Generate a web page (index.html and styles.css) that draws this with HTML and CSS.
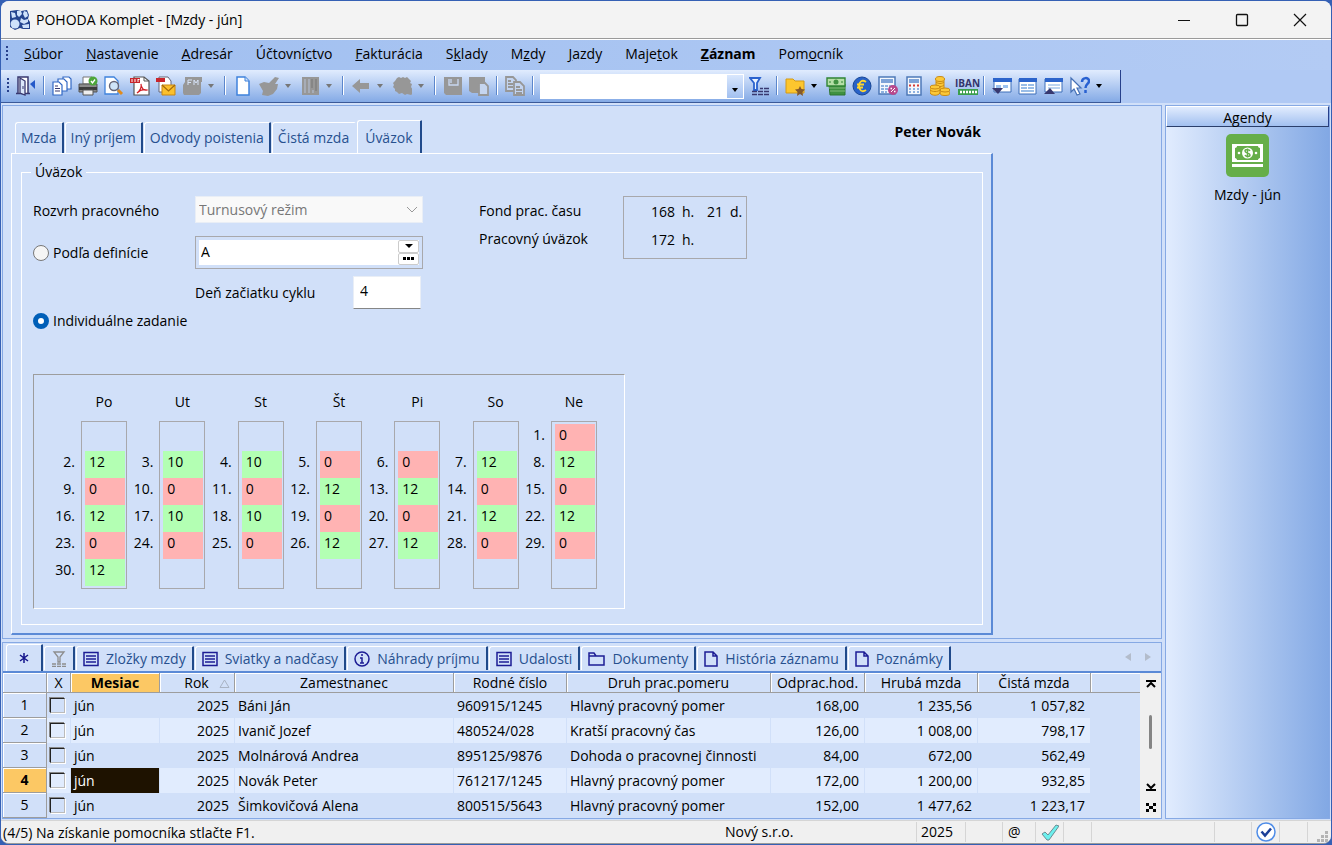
FILE: index.html
```
<!DOCTYPE html>
<html lang="sk">
<head>
    <meta charset="UTF-8">
    <meta name="viewport" content="width=device-width, initial-scale=1.0">
    <title>POHODA Komplet - [Mzdy - jún]</title>
    <link rel="stylesheet" href="styles.css">
</head>
<body>
<div class="window">

    <header class="titlebar">
        <svg class="app-logo" width="22" height="22" viewBox="0 0 22 22"><path d="M1 2l7-1 4 1 6-1 2 5-1 4 2 3v7h-7l-3-1-5 2-5-3V9z" fill="#25458f"/><g fill="#cfe2fb"><path d="M2 3l4 1 1 4-4 1zM15 2l3 1 1 4-3 2-2-4zM8 2h4l1 3-3 3-2-2z"/><circle cx="6" cy="15" r="4.500"/><path d="M12 9l3 2 4-1v3l-4 2-4-2zM13 16l7-1v4h-6z"/></g></svg>
        <span class="title">POHODA Komplet - [Mzdy - jún]</span>
        <button class="win-btn" aria-label="Minimalizovať"><svg width="14" height="14" viewBox="0 0 14 14" stroke="#111"><path d="M1 7.5h12"/></svg></button>
        <button class="win-btn" aria-label="Maximalizovať"><svg width="14" height="14" viewBox="0 0 14 14" fill="none" stroke="#111" stroke-width="1.3"><rect x="1.5" y="1.5" width="11" height="11" rx="1"/></svg></button>
        <button class="win-btn" aria-label="Zavrieť"><svg width="14" height="14" viewBox="0 0 14 14" stroke="#111" stroke-width="1.2"><path d="M1 1l12 12M13 1L1 13"/></svg></button>
    </header>

    <nav class="menu">
        <span class="grip"></span>
        <a href="#"><u>S</u>úbor</a>
        <a href="#"><u>N</u>astavenie</a>
        <a href="#"><u>A</u>dresár</a>
        <a href="#">Účtovní<u>c</u>tvo</a>
        <a href="#"><u>F</u>akturácia</a>
        <a href="#">S<u>k</u>lady</a>
        <a href="#">M<u>z</u>dy</a>
        <a href="#"><u>J</u>azdy</a>
        <a href="#">Maje<u>t</u>ok</a>
        <a href="#" class="bold"><u>Z</u>áznam</a>
        <a href="#">Pom<u>o</u>cník</a>
    </nav>

    <!-- Panel nástrojov -->
    <div class="toolbar">
        <span class="grip"></span>
        <button class="tool" aria-label="Koniec"><svg viewBox="0 0 20 20"><path d="M2 17V1h10v16M0 17.500h14" fill="#fff" stroke="#38386f" stroke-width="1.500"/><path d="M4 2l5 3v14l-5-2z" fill="#dce8fb" stroke="#38386f" stroke-width="1.300"/><path d="M7 10v3" stroke="#38386f"/><path d="M14 8l5-4v9z" fill="#2459c9"/></svg></button>
        <span class="sep"></span>
        <button class="tool" aria-label="Kopírovať"><svg viewBox="0 0 20 20" fill="#fff" stroke="#3268c4" stroke-width="1.200"><path d="M11 1h6l2 2v10h-8z"/><path d="M6 3h6l3 3v9H6z"/><path d="M1 6h6l3 3v10H1z"/><path d="M3 10h3M3 12.500h5M3 15h5" stroke="#38386f"/></svg></button>
        <button class="tool" aria-label="Tlačiť"><svg viewBox="0 0 20 20"><path d="M5 1h9v7H5z" fill="#fff" stroke="#777"/><path d="M1 8h18v8H1z" fill="#8b8b8b" stroke="#555"/><path d="M1 11h18v3H1z" fill="#3c3c3c"/><path d="M5 14h10v5H5z" fill="#eee" stroke="#555"/><circle cx="15" cy="5" r="4.500" fill="#4da63b"/><path d="M13 5l1.500 2L17 3.500" fill="none" stroke="#fff" stroke-width="1.300"/></svg></button>
        <button class="tool" aria-label="Náhľad"><svg viewBox="0 0 20 20"><path d="M1 1h9l4 4v13H1z" fill="#fff" stroke="#3f82dc" stroke-width="1.300"/><circle cx="10" cy="10" r="4.500" fill="#cfe4f8" stroke="#667" stroke-width="1.400"/><path d="M14 14l4 4" stroke="#e08b1b" stroke-width="3"/></svg></button>
        <button class="tool" aria-label="Export do PDF"><svg viewBox="0 0 20 20"><path d="M4 1h10l5 4v14H4z" fill="#fff" stroke="#555" stroke-width="1.200"/><path d="M14 1v4h5" fill="none" stroke="#555"/><path d="M0 2h10v5H0z" fill="#c8252c"/><path d="M2 3v3M5 3v3M8 3v3M8 3.500h1.500" stroke="#fff"/><path d="M7 17c3-2 5-6 4-9 0 4 3 7 6 6-3-1-7 0-10 3z" fill="none" stroke="#d11f26" stroke-width="1.200"/></svg></button>
        <button class="tool" aria-label="Poslať e-mailom"><svg viewBox="0 0 20 20"><path d="M3 1h9l3 4v11H3z" fill="#fff" stroke="#667" /><path d="M0 2h9v4H0z" fill="#c8252c"/><path d="M6 9h13v10H6z" fill="#fbc02d" stroke="#c98612"/><path d="M6 9l6.500 6L19 9" fill="none" stroke="#a56b0a" stroke-width="1.200"/></svg></button>
        <button class="tool wide" aria-label="Fiškálna tlač"><svg viewBox="0 0 20 20"><path d="M3 1h17v5h-1v11l-2 2H2l-1-2V9l2-3z" fill="#979797"/><path d="M6 9V4h4M6 6.500h3M12 9V4l2 3 2-3v5" fill="none" stroke="#d8e4f8"/></svg><i class="caret"></i></button>
        <span class="sep"></span>
        <button class="tool" aria-label="Nový"><svg viewBox="0 0 20 20"><path d="M4 1h8l4 4v14H4z" fill="#fff" stroke="#3f82dc" stroke-width="1.500"/><path d="M12 1v4h4" fill="#cfe2fb" stroke="#3f82dc"/></svg></button>
        <button class="tool wide" aria-label="Prenos"><svg viewBox="0 0 20 20"><path d="M0 8l5-2 5 1 6-6 4 1-4 6h3l-1 5-4 5-5 2-6-1 1-4z" fill="#979797"/></svg><i class="caret"></i></button>
        <button class="tool wide" aria-label="Záznamy"><svg viewBox="0 0 20 20"><path d="M2 1h17v18H2z" fill="#979797"/><path d="M5 3v14M9 3v14M13 14v3" stroke="#b6c2d8"/><path d="M11 3h2v9h-2zM15 3h2v12h-2z" fill="#868686"/></svg><i class="caret"></i></button>
        <span class="sep"></span>
        <button class="tool wide" aria-label="Späť"><svg viewBox="0 0 20 20"><path d="M1 10l8-7v4h9v6H9v4z" fill="#979797"/></svg><i class="caret"></i></button>
        <button class="tool wide" aria-label="História"><svg viewBox="0 0 20 20"><path d="M5 2l2-1 2 1 2-1 2 1 2-1 2 2 2 2-1 2 2 1-1 3 2 3 1 3-3 2-4-1-2 1-3-2-3 1-2-2-2-1 0-2-2-2 1-2-1-2 2-2z" fill="#979797"/></svg><i class="caret"></i></button>
        <span class="sep"></span>
        <button class="tool" aria-label="Uložiť"><svg viewBox="0 0 20 20"><path d="M1 1h18v18H3l-2-2z" fill="#979797"/><path d="M6 3v6h9V3M8 3v4" fill="none" stroke="#c9d8f1" stroke-width="1.300"/></svg></button>
        <button class="tool" aria-label="Uložiť kópiu"><svg viewBox="0 0 20 20"><path d="M0 1h16v16H3l-3-2z" fill="#979797"/><path d="M10 7h6l3 3v9h-9z" fill="#c5d5ef" stroke="#979797" stroke-width="1.800"/></svg></button>
        <span class="sep"></span>
        <button class="tool" aria-label="Kopírovať záznam"><svg viewBox="0 0 20 20" fill="#c3d4f0" stroke="#979797" stroke-width="1.800"><path d="M1 1h7l3 3v11H1z"/><path d="M9 6h6l4 4v9H9z"/><path d="M3 5h3M3 8h5M3 11h5M11 11h4M11 14h6M11 17h6"/></svg></button>
        <span class="sep"></span>
        <span class="combo"><input type="text" aria-label="Hľadať"><button aria-label="Rozbaliť"><i class="caret dark"></i></button></span>
        <button class="tool" aria-label="Filter"><svg viewBox="0 0 20 20"><path d="M1 2h10L8 7v7H5V7z" fill="#e9f3ff" stroke="#2a62ce" stroke-width="1.800"/><path d="M3 15.500h5m1 0h5m1 0h5M3 18.500h5m1 0h5m1 0h5M11 12.500h3m1 0h5" stroke="#38386f" stroke-width="1.500"/></svg></button>
        <span class="sep"></span>
        <button class="tool wide" aria-label="Obľúbené"><svg viewBox="0 0 20 20"><path d="M1 3h7l2 2h9v12H1z" fill="#fcc62f" stroke="#d39a16"/><path d="M15 10l1.500 3 3.500.5-2.500 2.500.5 4-3-2-3 2 .5-4-2.500-2.500 3.500-.5z" fill="#84592a"/></svg><i class="caret dark"></i></button>
        <button class="tool" aria-label="Peniaze"><svg viewBox="0 0 20 20"><path d="M3 8h16v11H4z" fill="#3f9140" stroke="#2c7430"/><path d="M3 12h16M4 15h15" stroke="#82bb7b"/><path d="M1 2h18v8H1z" fill="#b5dfa7" stroke="#2f8434" stroke-width="1.400"/><circle cx="10" cy="6" r="2.500" fill="#3f9140"/><path d="M3 6h2M15 6h2" stroke="#2f8434"/></svg></button>
        <button class="tool" aria-label="Cudzia mena"><svg viewBox="0 0 20 20"><circle cx="10" cy="10" r="9" fill="#2862c8" stroke="#184795"/><path d="M14 6c-4-3-7 0-7 4s3 7 7 4M5 8.500h7M5 11.500h6" fill="none" stroke="#ffd52e" stroke-width="1.800"/></svg></button>
        <button class="tool" aria-label="Výpočet percent"><svg viewBox="0 0 20 20"><path d="M1 1h16v17H1z" fill="#f4f8fd" stroke="#4e79b8" stroke-width="1.500"/><path d="M3 3h12v4H3z" fill="#7ea3d8"/><path d="M3 10h3m1 0h3m1 0h3M3 13h3m1 0h3M3 16h3m1 0h2" stroke="#8db1e0" stroke-width="2"/><circle cx="15" cy="14" r="5" fill="#b8478c"/><path d="M13 16l4-4" stroke="#fff"/><path d="M12.500 12.500h1.500M16 15.500h1.500" stroke="#fff" stroke-width="1.500"/></svg></button>
        <button class="tool" aria-label="Kalkulačka"><svg viewBox="0 0 20 20"><path d="M3 1h14v18H3z" fill="#f4f8fd" stroke="#4e79b8" stroke-width="1.500"/><path d="M5 3h10v4H5z" fill="#7ea3d8"/><path d="M5 9.500h2m2 0h2m2 0h2" stroke="#d43b36" stroke-width="2"/><path d="M5 13h2m2 0h2m2 0h2M5 16h2m2 0h2m2 0h2" stroke="#8db1e0" stroke-width="2"/></svg></button>
        <button class="tool" aria-label="Pokladňa"><svg viewBox="0 0 20 20" fill="#fbc838" stroke="#c98a12"><path d="M6 3v12h8V3z"/><ellipse cx="10" cy="3" rx="4.500" ry="2.500"/><path d="M6 6c2 2 6 2 8 0M6 9c2 2 6 2 8 0" fill="none"/><path d="M0 11v6c2 3 8 3 10 0v-6z"/><ellipse cx="5" cy="11" rx="5" ry="2"/><path d="M0 14c2 2 8 2 10 0" fill="none"/><ellipse cx="15" cy="17" rx="5" ry="2.500"/><ellipse cx="15" cy="14" rx="5" ry="2"/></svg></button>
        <button class="tool iban" aria-label="Kontrola IBAN"><span>IBAN</span><svg viewBox="0 0 20 6"><path d="M0 0h20v6H0z" fill="#3a9e4c"/><path d="M2 3h2m1 0h2m1 0h2m1 0h2m1 0h2m1 0h2" stroke="#fff" stroke-width="2.500"/></svg></button>
        <span class="sep"></span>
        <button class="tool" aria-label="Horná tabuľka"><svg viewBox="0 0 20 20"><path d="M2 3h17v13H2z" fill="#fff" stroke="#3d6fb9"/><path d="M1 2h19v4H1z" fill="#2c64cb"/><path d="M4 9h5v3H4zM11 9h5v3h-5z" fill="#9cc1ee"/><path d="M0 12h11l-5 6z" fill="#38386f"/></svg></button>
        <button class="tool" aria-label="Formulár a tabuľka"><svg viewBox="0 0 20 20"><path d="M1 3h17v15H1z" fill="#fff" stroke="#3d6fb9"/><path d="M1 2h18v4H1z" fill="#2c64cb"/><path d="M3 9h6m1 0h6M3 12h6m1 0h6M3 15h13" stroke="#78a8e0" stroke-width="1.500"/></svg></button>
        <button class="tool" aria-label="Dolná tabuľka"><svg viewBox="0 0 20 20"><path d="M1 3h17v13H1z" fill="#fff" stroke="#3d6fb9"/><path d="M1 2h18v4H1z" fill="#2c64cb"/><path d="M4 9h12M4 12h12" stroke="#78a8e0"/><path d="M0 18h11l-5-6z" fill="#38386f"/></svg></button>
        <button class="tool wide" aria-label="Pomocník"><svg viewBox="0 0 20 20"><path d="M1 2v14l3-3 3 6 3-1-3-6h4z" fill="#fff" stroke="#4570b5" stroke-width="1.200"/><path d="M12 6c0-5 7-5 7-1 0 3-3.500 3-3.500 7M15.500 14v3" fill="none" stroke="#2861d1" stroke-width="2.500"/></svg><i class="caret dark"></i></button>
    </div>

    <main class="workspace">
        <div class="left">
            <!-- Formulár agendy -->
            <section class="pane form-pane">
                <div class="sheet">
                    <div class="tab-row">
                        <button class="tab">Mzda</button>
                        <button class="tab">Iný príjem</button>
                        <button class="tab">Odvody poistenia</button>
                        <button class="tab before-active">Čistá mzda</button>
                        <button class="tab active">Úväzok</button>
                        <strong class="employee">Peter Novák</strong>
                    </div>
                    <div class="panel">
                        <fieldset>
                            <legend>Úväzok</legend>
                            <div class="form-top">
                                <div class="fields">
                                    <label class="field-label" for="rozvrh">Rozvrh pracovného</label>
                                    <div class="select-wrap">
                                        <select id="rozvrh" disabled><option>Turnusový režim</option></select>
                                        <svg width="10" height="6" viewBox="0 0 10 6" fill="none" stroke="#999"><path d="M0 0l5 5 5-5"/></svg>
                                    </div>
                                    <label class="radio"><input type="radio" name="zadanie">Podľa definície</label>
                                    <div class="spin-box">
                                        <input type="text" value="A" aria-label="Definícia">
                                        <div class="spin">
                                            <button aria-label="Zoznam"><i class="caret dark big"></i></button>
                                            <button aria-label="Vybrať"><svg width="12" height="3" viewBox="0 0 12 3"><path d="M0 0h3v3H0zM4 0h3v3H4zM8 0h3v3H8z"/></svg></button>
                                        </div>
                                    </div>
                                    <div class="cycle">
                                        <label for="den">Deň začiatku cyklu</label>
                                        <input id="den" type="text" value="4">
                                    </div>
                                    <label class="radio individual"><input type="radio" name="zadanie" checked>Individuálne zadanie</label>
                                </div>
                                <div class="fund-labels">
                                    <span>Fond prac. času</span>
                                    <span>Pracovný úväzok</span>
                                </div>
                                <div class="fund">
                                    <span>168</span><span>h.</span><span>21</span><span>d.</span>
                                    <span>172</span><span>h.</span>
                                </div>
                            </div>

                            <!-- Kalendár odpracovaných hodín -->
                            <div class="calendar">
                                <div class="day">
                                    <span class="name">Po</span>
                                    <div class="dates"><span></span><span>2.</span><span>9.</span><span>16.</span><span>23.</span><span>30.</span></div>
                                    <div class="hours"><span></span><input class="work" value="12" aria-label="2."><input class="free" value="0" aria-label="9."><input class="work" value="12" aria-label="16."><input class="free" value="0" aria-label="23."><input class="work" value="12" aria-label="30."></div>
                                </div>
                                <div class="day">
                                    <span class="name">Ut</span>
                                    <div class="dates"><span></span><span>3.</span><span>10.</span><span>17.</span><span>24.</span></div>
                                    <div class="hours"><span></span><input class="work" value="10" aria-label="3."><input class="free" value="0" aria-label="10."><input class="work" value="10" aria-label="17."><input class="free" value="0" aria-label="24."></div>
                                </div>
                                <div class="day">
                                    <span class="name">St</span>
                                    <div class="dates"><span></span><span>4.</span><span>11.</span><span>18.</span><span>25.</span></div>
                                    <div class="hours"><span></span><input class="work" value="10" aria-label="4."><input class="free" value="0" aria-label="11."><input class="work" value="10" aria-label="18."><input class="free" value="0" aria-label="25."></div>
                                </div>
                                <div class="day">
                                    <span class="name">Št</span>
                                    <div class="dates"><span></span><span>5.</span><span>12.</span><span>19.</span><span>26.</span></div>
                                    <div class="hours"><span></span><input class="free" value="0" aria-label="5."><input class="work" value="12" aria-label="12."><input class="free" value="0" aria-label="19."><input class="work" value="12" aria-label="26."></div>
                                </div>
                                <div class="day">
                                    <span class="name">Pi</span>
                                    <div class="dates"><span></span><span>6.</span><span>13.</span><span>20.</span><span>27.</span></div>
                                    <div class="hours"><span></span><input class="free" value="0" aria-label="6."><input class="work" value="12" aria-label="13."><input class="free" value="0" aria-label="20."><input class="work" value="12" aria-label="27."></div>
                                </div>
                                <div class="day">
                                    <span class="name">So</span>
                                    <div class="dates"><span></span><span>7.</span><span>14.</span><span>21.</span><span>28.</span></div>
                                    <div class="hours"><span></span><input class="work" value="12" aria-label="7."><input class="free" value="0" aria-label="14."><input class="work" value="12" aria-label="21."><input class="free" value="0" aria-label="28."></div>
                                </div>
                                <div class="day">
                                    <span class="name">Ne</span>
                                    <div class="dates"><span>1.</span><span>8.</span><span>15.</span><span>22.</span><span>29.</span></div>
                                    <div class="hours"><input class="free" value="0" aria-label="1."><input class="work" value="12" aria-label="8."><input class="free" value="0" aria-label="15."><input class="work" value="12" aria-label="22."><input class="free" value="0" aria-label="29."></div>
                                </div>
                            </div>
                        </fieldset>
                    </div>
                </div>
            </section>

            <!-- Tabuľka agendy -->
            <section class="pane table-pane">
                <div class="tab-row sub">
                    <button class="tab active star" aria-label="Všetko"><svg width="10" height="10" viewBox="0 0 10 10" stroke="#15158c" stroke-width="1.5"><path d="M5 0v10M1 2l8 6M9 2L1 8"/></svg></button>
                    <button class="tab" aria-label="Filter"><svg width="16" height="16" viewBox="0 0 16 16" fill="none" stroke="#8d8d8d" stroke-width="1.3"><path d="M3 1h10L9 6v5H7V6zM1 13h4m1 0h4m1 0h4M1 15.500h4m1 0h4m1 0h4"/></svg></button>
                    <button class="tab"><svg width="16" height="16" viewBox="0 0 16 16" fill="none" stroke="#1d1d95" stroke-width="1.5"><path d="M1 1.500h14v13H1zM3 5h10M3 8h10M3 11h10"/></svg>Zložky mzdy</button>
                    <button class="tab"><svg width="16" height="16" viewBox="0 0 16 16" fill="none" stroke="#1d1d95" stroke-width="1.5"><path d="M1 1.500h14v13H1zM3 5h10M3 8h10M3 11h10"/></svg>Sviatky a nadčasy</button>
                    <button class="tab"><svg width="16" height="16" viewBox="0 0 16 16" fill="none" stroke="#1d1d95" stroke-width="1.5"><circle cx="8" cy="8" r="7"/><path d="M8 3v2M6 7h2v5M6 12h4"/></svg>Náhrady príjmu</button>
                    <button class="tab"><svg width="16" height="16" viewBox="0 0 16 16" fill="none" stroke="#1d1d95" stroke-width="1.5"><path d="M1 1.500h14v13H1zM3 5h10M3 8h10M3 11h10"/></svg>Udalosti</button>
                    <button class="tab"><svg width="17" height="16" viewBox="0 0 17 16" fill="none" stroke="#1d1d95" stroke-width="1.5"><path d="M1 14V2h5l2 3h8v9zM1 5h7"/></svg>Dokumenty</button>
                    <button class="tab"><svg width="14" height="16" viewBox="0 0 14 16" fill="none" stroke="#1d1d95" stroke-width="1.5"><path d="M1 1h8l4 4v10H1zM9 1v4h4"/></svg>História záznamu</button>
                    <button class="tab"><svg width="14" height="16" viewBox="0 0 14 16" fill="none" stroke="#1d1d95" stroke-width="1.5"><path d="M1 1h8l4 4v10H1zM9 1v4h4"/></svg>Poznámky</button>
                    <div class="arrows">
                        <button aria-label="Doľava"><svg width="6" height="8" viewBox="0 0 6 8" fill="#b3bccb"><path d="M6 0v8L0 4z"/></svg></button>
                        <button aria-label="Doprava"><svg width="6" height="8" viewBox="0 0 6 8" fill="#b3bccb"><path d="M0 0v8l6-4z"/></svg></button>
                    </div>
                </div>
                <div class="grid-area">
                    <table>
                        <colgroup><col class="c-num"><col class="c-x"><col class="c-month"><col class="c-year"><col class="c-name"><col class="c-sum"><col class="c-type"><col class="c-hours"><col class="c-sum"><col class="c-sum"><col></colgroup>
                        <thead>
                            <tr><th></th><th>X</th><th class="sorted">Mesiac</th><th class="year">Rok<svg width="11" height="9" viewBox="0 0 11 9" fill="none" stroke="#a9b3c4"><path d="M1 8.500h9L5.500 1z"/></svg></th><th>Zamestnanec</th><th>Rodné číslo</th><th>Druh prac.pomeru</th><th>Odprac.hod.</th><th>Hrubá mzda</th><th>Čistá mzda</th><th class="rest"></th></tr>
                        </thead>
                        <tbody>
                            <tr><th>1</th><td><input type="checkbox" aria-label="Riadok 1"></td><td>jún</td><td class="r">2025</td><td>Báni Ján</td><td>960915/1245</td><td>Hlavný pracovný pomer</td><td class="r">168,00</td><td class="r">1 235,56</td><td class="r">1 057,82</td><td class="rest"></td></tr>
                            <tr><th>2</th><td><input type="checkbox" aria-label="Riadok 2"></td><td>jún</td><td class="r">2025</td><td>Ivanič Jozef</td><td>480524/028</td><td>Kratší pracovný čas</td><td class="r">126,00</td><td class="r">1 008,00</td><td class="r">798,17</td><td class="rest"></td></tr>
                            <tr><th>3</th><td><input type="checkbox" aria-label="Riadok 3"></td><td>jún</td><td class="r">2025</td><td>Molnárová Andrea</td><td>895125/9876</td><td>Dohoda o pracovnej činnosti</td><td class="r">84,00</td><td class="r">672,00</td><td class="r">562,49</td><td class="rest"></td></tr>
                            <tr class="current"><th>4</th><td><input type="checkbox" aria-label="Riadok 4"></td><td class="cursor">jún</td><td class="r">2025</td><td>Novák Peter</td><td>761217/1245</td><td>Hlavný pracovný pomer</td><td class="r">172,00</td><td class="r">1 200,00</td><td class="r">932,85</td><td class="rest"></td></tr>
                            <tr><th>5</th><td><input type="checkbox" aria-label="Riadok 5"></td><td>jún</td><td class="r">2025</td><td>Šimkovičová Alena</td><td>800515/5643</td><td>Hlavný pracovný pomer</td><td class="r">152,00</td><td class="r">1 477,62</td><td class="r">1 223,17</td><td class="rest"></td></tr>
                        </tbody>
                    </table>
                    <div class="scroll">
                        <button aria-label="Na začiatok"><svg width="10" height="8" viewBox="0 0 10 8" fill="none" stroke="#000" stroke-width="2"><path d="M0 1h10M1 7l4-4 4 4"/></svg></button>
                        <div class="track"><div class="thumb"></div></div>
                        <button aria-label="Na koniec"><svg width="10" height="8" viewBox="0 0 10 8" fill="none" stroke="#000" stroke-width="2"><path d="M0 7h10M1 1l4 4 4-4"/></svg></button>
                        <button aria-label="Rozdeliť"><svg width="10" height="9" viewBox="0 0 10 9"><path d="M0 0h3v3H0zM7 0h3v3H7zM3 3h4v3H3zM0 6h3v3H0zM7 6h3v3H7z"/></svg></button>
                    </div>
                </div>
            </section>
        </div>

        <!-- Otvorené agendy -->
        <aside class="pane agendas">
            <h2>Agendy</h2>
            <a href="#">
                <svg width="43" height="43" viewBox="0 0 43 43"><rect width="43" height="43" rx="5" fill="#66ae49"/><path d="M6 10h31v18H6zM6 30h31v3H6z" fill="#fff"/><path d="M9 14c1 0 2-1 2-2h21c0 1 1 2 2 2v10c-1 0-2 1-2 2H11c0-1-1-2-2-2z" fill="#66ae49"/><circle cx="21.500" cy="19" r="5.500" fill="#fff"/><circle cx="13" cy="19" r="1.300" fill="#fff"/><circle cx="30" cy="19" r="1.300" fill="#fff"/><path d="M24 17c-1-2-5-2-5 0 0 2.500 5 1.500 5 4 0 2-4 2-5 0M21.500 14.500v9" fill="none" stroke="#66ae49" stroke-width="1.500"/></svg>
                <span>Mzdy - jún</span>
            </a>
        </aside>
    </main>

    <footer class="status">
        <span class="help">(4/5) Na získanie pomocníka stlačte F1.</span>
        <span class="s-firm">Nový s.r.o.</span>
        <span class="s-year">2025</span>
        <span class="s-mid"></span>
        <span class="s-at">@</span>
        <span class="s-small"><svg width="18" height="17" viewBox="0 0 18 17"><path d="M1 10l3-2 3 3 8-10 3 1L8 16H6z" fill="#6cf0ee" stroke="#6b8c93"/></svg></span>
        <span class="s-small"></span>
        <span class="s-wide"></span>
        <span class="s-mid"></span>
        <span class="s-small"><svg width="20" height="20" viewBox="0 0 20 20"><circle cx="10" cy="10" r="9" fill="#fff" stroke="#4f8de8" stroke-width="1.500"/><path d="M5.500 9.500l3.500 4 6-7" fill="none" stroke="#1c3f98" stroke-width="2.500"/></svg></span>
        <span class="s-small"></span>
        <span class="s-grip"><svg width="11" height="11" viewBox="0 0 11 11" fill="#b4b4b4"><path d="M8 0h3v3H8zM4 4h3v3H4zM8 4h3v3H8zM0 8h3v3H0zM4 8h3v3H4zM8 8h3v3H8z"/></svg></span>
    </footer>
</div>
</body>
</html>
```
FILE: styles.css
```
* {
    box-sizing: border-box;
}

body {
    margin: 0;
    background: #3560b4;
    font-family: "Open Sans", "Noto Sans", sans-serif;
    font-size: 14px;
    line-height: 20px;
    color: #000;
}

button, input, select {
    margin: 0;
    padding: 0;
    border: none;
    border-radius: 0;
    background: none;
    font: inherit;
    color: inherit;
}

a {
    color: inherit;
    text-decoration: none;
}

svg {
    flex-shrink: 0;
}

.window {
    display: flex;
    flex-direction: column;
    min-height: calc(100vh - 2px);
    margin: 1px 1px 0;
    border-bottom: 1px solid #9a9a9a;
    border-radius: 8px;
    background: #d1e0f9;
    overflow: hidden;
}

/* Titulok okna */
.titlebar {
    display: flex;
    align-items: center;
    height: 38px;
    padding: 0 2px 0 8px;
    background: #f3f3f3;
    border-bottom: 1px solid #9a9a9a;
}

.title {
    flex: 1;
    padding-left: 5px;
}

.win-btn {
    display: flex;
    align-items: center;
    justify-content: center;
    width: 58px;
    height: 100%;
}

/* Hlavná ponuka */
.menu {
    display: flex;
    align-items: center;
    gap: 1px;
    height: 31px;
    padding: 0 0 2px 5px;
    border-top: 1px solid #fff;
    background: linear-gradient(90deg, #a0bff0, #b3cbf4);
}

.menu a {
    padding: 0 11px;
}

.grip {
    width: 6px;
    height: 16px;
    background: repeating-linear-gradient(180deg, #27408b 0 2px, transparent 2px 4px);
    background-size: 2px 100%;
    background-repeat: no-repeat;
}

.bold {
    font-weight: bold;
}

/* Panel nástrojov */
.toolbar {
    display: flex;
    align-items: center;
    align-self: flex-start;
    height: 33px;
    padding: 0 12px 1px 6px;
    background: linear-gradient(180deg, #e1ecfe, #84aae6);
    border-right: 1px solid #27408b;
    border-bottom: 1px solid #3b5998;
    box-shadow: 600px 0 0 0 #b0c9f4;
}

.tool {
    display: flex;
    align-items: center;
    width: 26px;
    height: 26px;
    padding-left: 3px;
}

.tool svg {
    width: 20px;
    height: 20px;
}

.wide {
    width: 41px;
}

.caret {
    margin-left: 6px;
    border: 3px solid transparent;
    border-top: 4px solid #777;
    border-bottom: 0;
}

.caret.dark {
    border-top-color: #000;
}

.sep {
    width: 2px;
    height: 19px;
    margin: 0 4px;
    background: #fff;
    border-left: 1px solid #5b86cc;
}

.iban {
    flex-direction: column;
    justify-content: center;
    font-size: 10px;
    line-height: 12px;
    font-weight: bold;
    color: #33336b;
}

.iban svg {
    height: 6px;
}

.combo {
    display: flex;
    width: 204px;
    height: 25px;
    margin: 2px 2px 0;
    padding: 1px;
    background: #fff;
}

.combo input {
    flex: 1;
    min-width: 0;
}

.combo button {
    width: 16px;
    background: linear-gradient(180deg, #d9e7fd, #a2c0f0);
}

.combo .caret {
    display: inline-block;
    margin: 0;
}

/* Pracovná plocha */
.workspace {
    display: flex;
    flex: 1;
    gap: 3px;
    padding: 2px 1px 1px;
}

.left {
    display: flex;
    flex: 1;
    flex-direction: column;
    gap: 3px;
    min-width: 0;
}

.pane {
    border: 1px solid #86a9e4;
}

.form-pane {
    display: flex;
    flex: 1;
    padding: 13px 8px 3px;
}

.sheet {
    display: flex;
    flex: 1;
    flex-direction: column;
    max-width: 982px;
}

.tab-row {
    display: flex;
    align-items: flex-end;
    gap: 1px;
    height: 34px;
    padding-left: 4px;
}

.tab {
    display: flex;
    align-items: center;
    justify-content: center;
    height: 31px;
    padding: 0 5px;
    border: 1px solid #fff;
    border-right: 2px solid #204a8b;
    border-bottom: 0;
    border-radius: 3px 1px 0 0;
    color: #27508f;
    white-space: nowrap;
}

.tab.active {
    height: 34px;
    padding: 0 7px;
    margin-bottom: -1px;
    background: #d1e0f9;
}

.tab.before-active {
    border-right-color: transparent;
}

.employee {
    align-self: flex-start;
    margin-left: auto;
    padding: 3px 12px 0 0;
}

.panel {
    display: flex;
    flex: 1;
    padding: 8px 8px 8px 9px;
    border: 1px solid #fff;
    border-right: 2px solid #5b8ad6;
    border-bottom: 2px solid #5b8ad6;
}

fieldset {
    flex: 1;
    min-width: 0;
    margin: 0;
    padding: 14px 11px;
    border: 1px solid #fff;
}

legend {
    padding: 0 4px;
    margin-left: -2px;
}

.form-top {
    display: flex;
}

.fields {
    display: grid;
    grid-template-columns: 162px 228px;
    grid-template-rows: 40px 40px 35px 20px;
    align-items: start;
}

.field-label {
    line-height: 30px;
}

.select-wrap {
    position: relative;
}

.select-wrap select {
    appearance: none;
    width: 100%;
    height: 27px;
    padding-left: 3px;
    border: 1px solid #e9eef6;
    background: #f9f9f9;
    color: #777;
    opacity: 1;
}

.select-wrap svg {
    position: absolute;
    right: 6px;
    top: 11px;
}

.radio {
    display: flex;
    align-items: center;
    gap: 4px;
    height: 34px;
}

.individual {
    grid-column: 1 / -1;
    height: 20px;
}

.radio input {
    appearance: none;
    width: 16px;
    height: 16px;
    border: 1px solid #777;
    border-radius: 50%;
    background: #f5f5f5;
}

.radio input:checked {
    border: 5px solid #005fb8;
    background: #fff;
}

.spin-box {
    display: flex;
    height: 33px;
    padding: 3px;
    border: 1px solid #a8a8ac;
}

.spin-box input {
    flex: 1;
    min-width: 0;
    padding: 0 0 2px 2px;
    background: #fff;
}

.spin {
    display: flex;
    flex-direction: column;
    width: 21px;
    background: #fff;
}

.spin button {
    display: flex;
    flex: 1;
    align-items: center;
    justify-content: center;
    border: 1px solid #ccc;
    border-radius: 2px;
}

.caret.big {
    margin: 0;
    border-width: 4px 4px 0;
}

.cycle {
    display: flex;
    grid-column: 2;
    align-items: center;
    justify-content: space-between;
    padding-right: 2px;
}

.cycle input {
    width: 68px;
    height: 33px;
    padding: 0 6px 4px;
    border: 1px solid #e9eef6;
    border-bottom-color: #868686;
    background: #fff;
}

.fund-labels {
    display: flex;
    flex-direction: column;
    gap: 8px;
    width: 144px;
    margin-left: 56px;
    padding-top: 5px;
}

.fund {
    display: grid;
    grid-template-columns: 24px 18px 16px 14px;
    align-content: start;
    gap: 8px 7px;
    width: 124px;
    height: 63px;
    padding: 5px 4px 0 27px;
    border: 1px solid #a8a8ac;
}

/* Kalendár */
.calendar {
    display: flex;
    justify-content: space-between;
    width: 592px;
    height: 235px;
    margin-top: 43px;
    padding: 17px 27px 0 19px;
    border: 1px solid #fff;
    border-top-color: #9d9d9d;
    border-left-color: #9d9d9d;
}

.day {
    display: grid;
    grid-template-columns: 22px 46px;
    grid-template-rows: 20px 168px;
    gap: 9px 6px;
}

.name {
    grid-column: 2;
    text-align: center;
}

.dates {
    display: flex;
    flex-direction: column;
    align-items: flex-end;
    padding-top: 3px;
}

.dates span {
    height: 27px;
    line-height: 22px;
}

.hours {
    display: flex;
    flex-direction: column;
    padding: 2px 1px 0 3px;
    border: 1px solid #a8a8ac;
}

.hours span, .hours input {
    width: 100%;
    height: 27px;
}

.hours input {
    padding: 0 0 6px 4px;
}

.work {
    background: #b3ffb3;
}

.free {
    background: #ffb3b3;
}

/* Tabuľka */
.sub {
    height: 30px;
    padding: 0 10px 1px 3px;
    border-bottom: 2px solid #5b8ad6;
}

.sub .tab {
    gap: 7px;
    height: 24px;
    padding: 0 6px;
}

.sub .star {
    width: 37px;
    height: 27px;
}

.arrows {
    display: flex;
    gap: 14px;
    align-self: center;
    margin-left: auto;
}

.arrows button {
    display: flex;
}

.grid-area {
    display: flex;
}

table {
    flex: 1;
    width: 100%;
    table-layout: fixed;
    border-collapse: separate;
    border-spacing: 0;
}

.c-num { width: 44px; }
.c-x { width: 24px; }
.c-month { width: 89px; }
.c-year { width: 75px; }
.c-name { width: 219px; }
.c-type { width: 204px; }
.c-hours { width: 94px; }
.c-sum { width: 113px; }

th, td {
    padding: 0 4px;
    font-weight: normal;
    white-space: nowrap;
}

thead th {
    height: 20px;
    line-height: 18px;
    padding: 0;
    border: 1px solid #9d9d9d;
    border-width: 0 1px 1px 0;
    box-shadow: inset 1px 1px #fff;
}

thead .sorted {
    background: #fcc864;
    font-weight: bold;
}

thead .year {
    padding-left: 20px;
}

.year svg {
    margin-left: 10px;
}

thead .rest {
    border-right: 0;
}

tbody th {
    height: 25px;
    border: 1px solid #9d9d9d;
    border-width: 0 1px 1px 0;
    box-shadow: inset 1px 1px #fff;
}

tbody td {
    height: 25px;
    padding: 0 3px;
    border-right: 1px solid #d1e0f9;
}

tbody tr:nth-child(even) td {
    background: #e1ecfe;
}

tbody tr:nth-child(even) .rest {
    background: none;
}

.current th {
    background: #fcc864;
    font-weight: bold;
}

tbody tr td.cursor {
    background: #1e1200;
    color: #fff;
}

.r {
    text-align: right;
    padding-right: 5px;
}

td input {
    display: block;
    appearance: none;
    width: 15px;
    height: 15px;
    border: 1px solid #222;
    border-right-color: #bbb;
    border-bottom-color: #bbb;
    box-shadow: -1px -1px #888, 1px 1px #fff;
}

.scroll {
    display: flex;
    flex-direction: column;
    align-items: center;
    width: 21px;
    background: #f0f0f0;
}

.scroll button {
    display: flex;
    align-items: center;
    height: 21px;
}

.track {
    flex: 1;
    padding-top: 21px;
}

.thumb {
    width: 3px;
    height: 34px;
    border-radius: 2px;
    background: #858585;
}

/* Agendy */
.agendas {
    width: 165px;
    background: linear-gradient(90deg, #e1ecfe, #82a8e4);
}

.agendas h2 {
    margin: 0;
    height: 21px;
    line-height: 22px;
    border: 1px solid #fff;
    border-right: 1px solid #27408b;
    border-bottom: 1px solid #2b3f6b;
    background: linear-gradient(180deg, #e1ecfe, #a2c0f0);
    font-size: 14px;
    font-weight: normal;
    text-align: center;
}

.agendas a {
    display: flex;
    flex-direction: column;
    align-items: center;
    gap: 8px;
    padding-top: 7px;
}

/* Stavový riadok */
.status {
    display: flex;
    height: 23px;
    padding-left: 2px;
    border-top: 1px solid #d5d5d5;
    background: #f0f0f0;
    line-height: 24px;
}

.help {
    flex: 1;
}

.status span + span {
    display: flex;
    align-items: center;
    margin: 1px 0;
    line-height: 20px;
    border-right: 1px solid #d5d5d5;
}

.s-small {
    justify-content: center;
}

.s-firm { width: 192px; }

.s-year {
    width: 49px;
    padding-left: 4px;
}

.s-at {
    width: 33px;
    padding-left: 5px;
}

.s-mid { width: 37px; }
.s-small { width: 28px; }
.s-wide { width: 123px; }

.status .s-grip {
    width: 23px;
    padding-left: 9px;
    border-right: 0;
    align-items: flex-end;
}
```
